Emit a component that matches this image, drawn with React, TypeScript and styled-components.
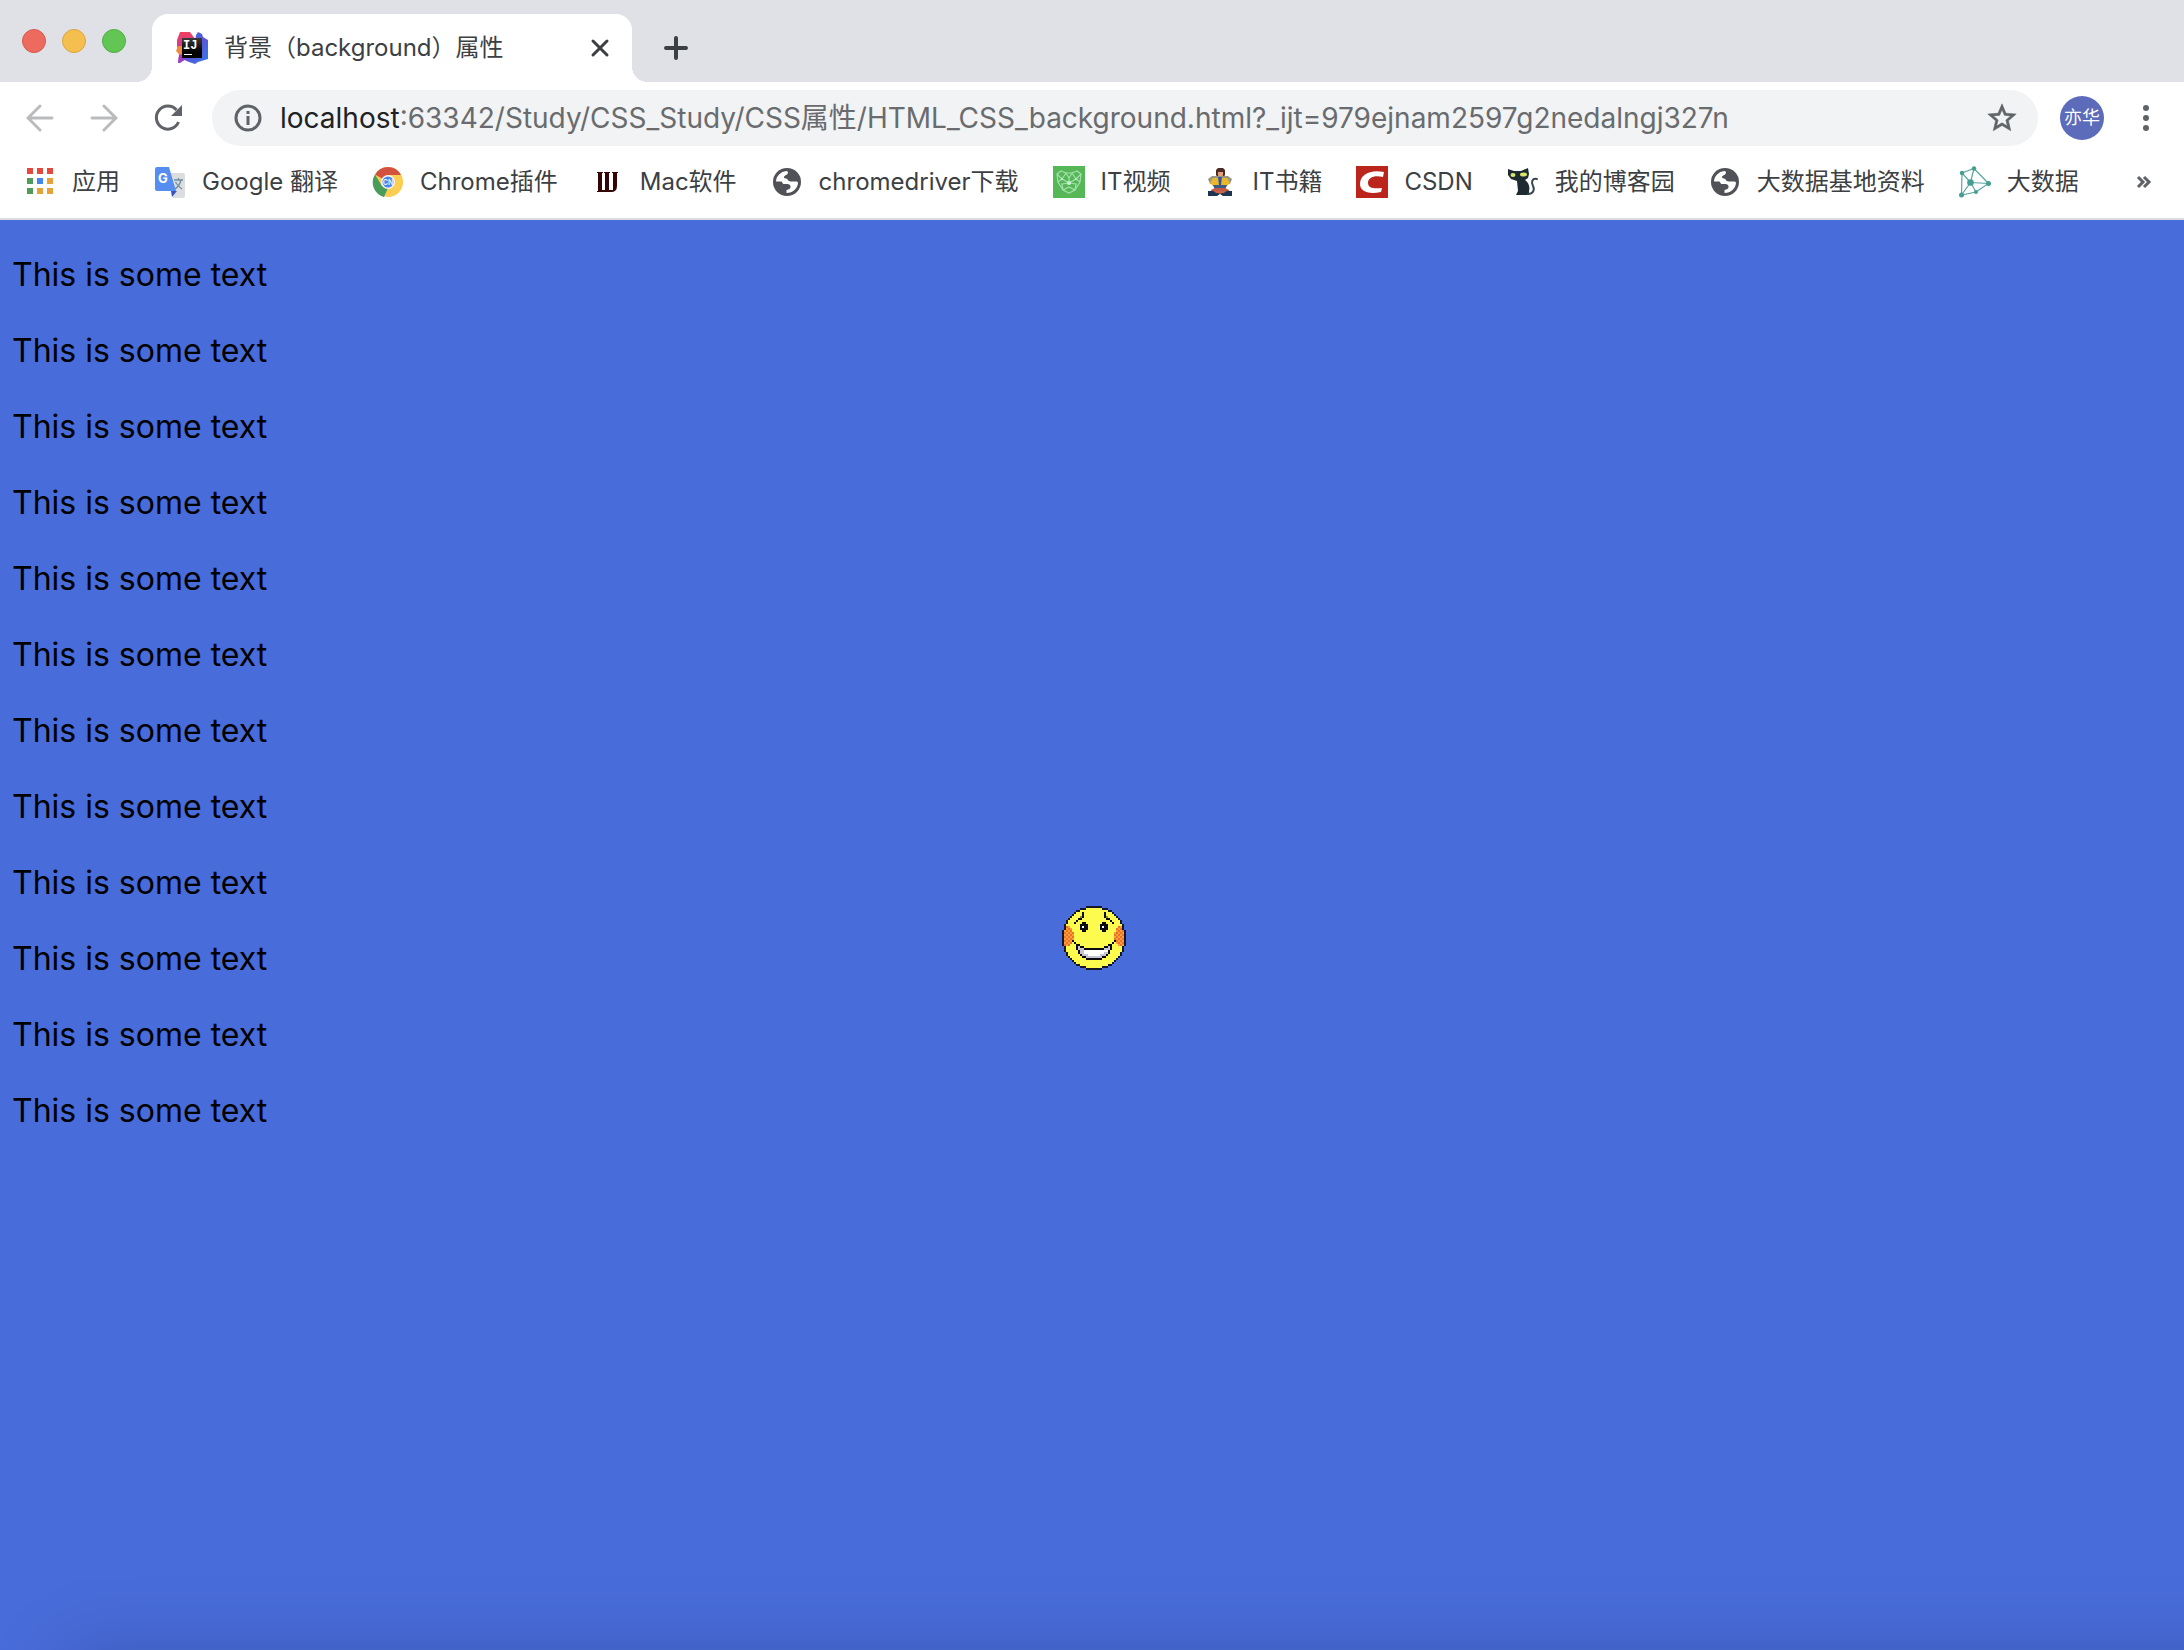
import React from 'react';
import styled, { createGlobalStyle } from 'styled-components';

const colors = {
  strip: '#dfe1e6',
  field: '#f1f3f4',
  ink: '#3c4043',
  icon: '#5f6368',
  iconOff: '#babbbd',
  page: '#486cda',
};

const GlobalStyle = createGlobalStyle`
  * { box-sizing: border-box; }
  body {
    margin: 0;
    font-family: Inter, 'Noto Sans CJK SC', sans-serif;
    color: ${colors.ink};
    background: #fff;
  }
`;

const Window = styled.div`
  display: flex;
  flex-direction: column;
  min-height: 100vh;
`;

const TabStrip = styled.header`
  display: flex;
  align-items: flex-end;
  padding: 14px 28px 0 22px;
  background: ${colors.strip};
`;

const Lights = styled.div`
  display: flex;
  align-self: center;
  gap: 16px;
  padding-bottom: 14px;
`;

const Light = styled.button<{ $fill: string; $edge: string }>`
  width: 24px;
  height: 24px;
  padding: 0;
  border: 1px solid ${(p) => p.$edge};
  border-radius: 50%;
  background: ${(p) => p.$fill};
`;

const Tab = styled.div`
  position: relative;
  display: flex;
  align-items: center;
  gap: 16px;
  width: 480px;
  height: 68px;
  margin-left: 26px;
  padding: 0 16px 0 24px;
  border-radius: 16px 16px 0 0;
  background: #fff;

  &::before,
  &::after {
    content: '';
    position: absolute;
    bottom: 0;
    width: 16px;
    height: 16px;
  }
  &::before {
    right: 100%;
    background: radial-gradient(circle at 0 0, transparent 16px, #fff 16px);
  }
  &::after {
    left: 100%;
    background: radial-gradient(circle at 100% 0, transparent 16px, #fff 16px);
  }
`;

const TabTitle = styled.span`
  flex: 1;
  font-size: 24px;
  line-height: 32px;
  white-space: nowrap;
`;

const IconButton = styled.button<{ $size: number }>`
  display: flex;
  flex: none;
  align-items: center;
  justify-content: center;
  width: ${(p) => p.$size}px;
  height: ${(p) => p.$size}px;
  padding: 0;
  border: 0;
  border-radius: 50%;
  background: transparent;
`;

const NewTab = styled(IconButton)`
  margin: 0 0 10px 20px;
`;

const Toolbar = styled.nav`
  display: flex;
  align-items: center;
  padding: 8px 14px 0 16px;
`;

const NavButtons = styled.div`
  display: flex;
  gap: 16px;
`;

const AddressBar = styled.form`
  display: flex;
  flex: 1;
  align-items: center;
  height: 56px;
  margin: 0 22px 0 20px;
  padding: 0 16px 0 20px;
  border-radius: 28px;
  background: ${colors.field};
  font-size: 28px;
  line-height: 40px;
`;

const Host = styled.label`
  padding-left: 16px;
  color: #202124;
`;

const AddressInput = styled.input`
  flex: 1;
  min-width: 0;
  height: 40px;
  padding: 0;
  border: 0;
  outline: 0;
  background: transparent;
  font: inherit;
  color: #696b6e;
`;

const Avatar = styled.button`
  width: 44px;
  height: 44px;
  margin-right: 18px;
  padding: 0;
  border: 0;
  border-radius: 50%;
  background: #5c6bba;
  color: #fff;
  font: 18px/44px Inter, 'Noto Sans CJK SC', sans-serif;
`;

const Bookmarks = styled.nav`
  display: flex;
  align-items: center;
  gap: 34px;
  height: 74px;
  padding: 0 28px 0 24px;
  border-bottom: 2px solid #dadce0;
`;

const Bookmark = styled.a`
  display: flex;
  flex: none;
  align-items: center;
  gap: 16px;
  color: inherit;
  font-size: 24px;
  line-height: 32px;
  text-decoration: none;
  white-space: nowrap;
`;

const More = styled(IconButton)`
  margin-left: auto;
`;

const Page = styled.main`
  position: relative;
  flex: 1;
  overflow: hidden;
  padding: 1px 12px;
  background: ${colors.page};

  &::after {
    content: '';
    position: absolute;
    top: 100%;
    left: 64px;
    right: -100px;
    height: 100px;
    box-shadow: 0 0 76px rgba(0, 0, 0, 0.17);
  }
`;

const Line = styled.p`
  margin: 32px 0;
  color: #000;
  font-size: 32px;
  line-height: 44px;
`;

const Backdrop = styled.div`
  position: absolute;
  inset: 6px 0 0 4px;
  display: grid;
  place-items: center;
`;

type Pixel = [x: number, y: number, w: number, h: number, fill: string];

const facePixels = (): Pixel[] => {
  const out: Pixel[] = [];
  const inside = (x: number, y: number) => (x - 15.5) ** 2 + (y - 15.5) ** 2 <= 256;
  for (let y = 0; y < 32; y++) {
    for (let x = 0; x < 32; x++) {
      if (!inside(x, y)) continue;
      const edge = !inside(x - 1, y) || !inside(x + 1, y) || !inside(x, y - 1) || !inside(x, y + 1);
      const fromSide = Math.min(x, 31 - x);
      const reach = 6 - Math.abs(y - 14.5) * 0.45;
      let fill = '#fdfb4e';
      if (y >= 10 && y <= 19 && fromSide <= reach) fill = (x + y) % 2 ? '#f9a035' : '#ee6f2d';
      if (edge) fill = '#15172a';
      out.push([x, y, 1, 1, fill]);
    }
  }
  const k = '#0b0b10';
  const w = '#ffffff';
  const g = '#c4c6d0';
  out.push(
    [10, 3, 1, 3, k], [9, 6, 1, 1, k], [8, 6, 1, 1, k], [7, 7, 1, 1, k], [6, 8, 1, 1, k], [9, 5, 1, 1, '#8d8b35'],
    [21, 3, 1, 3, k], [22, 6, 1, 1, k], [23, 6, 1, 1, k], [24, 7, 1, 1, k], [25, 8, 1, 1, k], [22, 5, 1, 1, '#8d8b35'],
    [10, 8, 2, 5, k], [9, 9, 4, 3, k], [10, 10, 1, 1, w],
    [20, 8, 2, 5, k], [19, 9, 4, 3, k], [20, 10, 1, 1, w],
    [5, 17, 1, 1, k], [6, 18, 1, 1, k], [25, 18, 1, 1, k], [26, 17, 1, 1, k],
    [7, 19, 1, 3, k], [8, 22, 1, 2, k], [9, 24, 1, 1, k], [10, 25, 2, 1, k], [12, 26, 8, 1, k],
    [24, 19, 1, 3, k], [23, 22, 1, 2, k], [22, 24, 1, 1, k], [20, 25, 2, 1, k],
    [8, 20, 1, 2, g], [23, 20, 1, 2, g], [8, 19, 1, 1, k], [23, 19, 1, 1, k],
    [9, 20, 2, 1, k], [21, 20, 2, 1, k], [11, 21, 10, 1, k],
    [9, 21, 2, 1, g], [21, 21, 2, 1, g],
    [9, 22, 14, 2, w], [10, 24, 12, 1, w], [12, 25, 8, 1, g],
    [9, 22, 2, 2, g], [10, 24, 3, 1, g], [19, 24, 3, 1, g], [21, 23, 2, 1, g],
  );
  return out;
};

const Smiley = () => (
  <svg width="64" height="64" viewBox="0 0 32 32" shapeRendering="crispEdges" role="img" aria-label="smiley">
    {facePixels().map(([x, y, w, h, fill], i) => (
      <rect key={i} x={x} y={y} width={w} height={h} fill={fill} />
    ))}
  </svg>
);

const Favicon = ({ children }: { children: React.ReactNode }) => (
  <svg width="32" height="32" viewBox="0 0 32 32" aria-hidden="true">
    {children}
  </svg>
);

const IdeaIcon = () => (
  <Favicon>
    <defs>
      <linearGradient id="ideaWarm" x1="0" y1="0" x2="0" y2="1">
        <stop offset="0" stopColor="#f0405a" />
        <stop offset="0.4" stopColor="#d93a8c" />
        <stop offset="1" stopColor="#7a49dc" />
      </linearGradient>
      <linearGradient id="ideaCool" x1="0" y1="0" x2="1" y2="1">
        <stop offset="0" stopColor="#3f6fe4" />
        <stop offset="0.55" stopColor="#5a57d8" />
        <stop offset="1" stopColor="#2a80ec" />
      </linearGradient>
      <linearGradient id="ideaBox" x1="0" y1="0" x2="0" y2="1">
        <stop offset="0" stopColor="#3a3a3a" />
        <stop offset="0.7" stopColor="#000" />
      </linearGradient>
    </defs>
    <path d="M4 0h10l5 7-6 18-9 6H2l1-8-2-9 0-6z" fill="url(#ideaWarm)" />
    <path d="M22 0l4 2 1 3 5 3v19l-10 3-3 2-6-2-7-3 12-12 2-12z" fill="url(#ideaCool)" />
    <path d="M2 14h5v10l-3-1-4-4z" fill="#f08a3c" />
    <path d="M3 24l3-2 4 5-8 4z" fill="#a23cc0" />
    <rect x="6" y="6" width="20" height="20" fill="url(#ideaBox)" />
    <text x="7" y="17" fontSize="12" fontWeight="700" fontFamily="'Liberation Mono', monospace" fill="#fff">
      IJ
    </text>
    <rect x="8" y="22" width="8" height="1" fill="#fff" />
  </Favicon>
);

const AppsIcon = () => {
  const r = '#e5493e';
  const g = '#529a5c';
  const y = '#e7a13a';
  const cells = [r, r, r, g, '#4285f4', y, g, y, y];
  return (
    <Favicon>
      {cells.map((fill, i) => (
        <rect key={i} x={3 + (i % 3) * 10} y={2 + Math.floor(i / 3) * 10} width="6" height="6" fill={fill} />
      ))}
    </Favicon>
  );
};

const TranslateIcon = () => (
  <Favicon>
    <path d="M14 7h15a2 2 0 012 2v21a2 2 0 01-2 2H19z" fill="#dcdddf" />
    <path d="M17 25h6l-5 6z" fill="#3a52bd" />
    <path d="M3 1h12l7 24H3a2 2 0 01-2-2V3a2 2 0 012-2z" fill="#568df0" />
    <text x="4" y="17" fontSize="13" fontWeight="700" fill="#fff">G</text>
    <path d="M20 14h9M24.500 12v2M27 14c-1 4-3 7-6 9M21.500 16c1.500 3 4 5 6.500 7" fill="none" stroke="#6f8fa0" strokeWidth="1.300" />
  </Favicon>
);

const ChromeIcon = () => (
  <Favicon>
    <circle cx="16" cy="16" r="15" fill="#fbce53" />
    <path d="M16 16L3 8.500A15 15 0 0116 1a15 15 0 0113 8H16z" fill="#d2523f" />
    <path d="M3 8.500l7 11.500 6 2-4 9A15 15 0 013 8.500z" fill="#4a9c5b" />
    <path d="M16 9h13A15 15 0 0116 31h-1l7-12z" fill="#fbce53" />
    <circle cx="16" cy="16" r="7" fill="#f4f4f4" />
    <circle cx="16" cy="16" r="5.500" fill="#4c86ea" />
    <text x="16" y="18.500" fontSize="7" fontWeight="700" textAnchor="middle" fill="#dfeaff">CN</text>
  </Favicon>
);

const MacSoftIcon = () => (
  <Favicon>
    <path d="M5 6h6v1h-1v17h3V7h-1V6h6v1h-1v17h4V7h-1V6h6v1h-1v13q0 6-6 6H5v-1h1V7H5z" fill="#330505" />
  </Favicon>
);

const GlobeIcon = () => (
  <Favicon>
    <circle cx="16" cy="16" r="14" fill="#505257" />
    <path
      d="M5 15.500C5.300 10 9.500 5.600 15.500 5c2 .5 1.800 2.500.5 3.400-2 1.300-3.400 1.600-3 3.200.4 1.400 3 .6 3.600 2 .5 1.300 1.700 1.900 3.400 1.900h4.500c1.300 0 2.500.3 2.500 1.500C26.500 22.500 22 27 15.500 27v-3c2.800-.4 4.500-1.800 4-4-.4-1.600-2-2-4-2h-3c-1.200-.3-1-2.500-2.500-2.500z"
      fill="#fff"
    />
  </Favicon>
);

const HeadMeshIcon = () => (
  <Favicon>
    <rect width="32" height="32" fill="#55b756" />
    <g fill="none" stroke="#a5dfac" strokeWidth="1.200">
      <path d="M4 8l4-3 5 2h6l5-2 4 3-1 8-5 8-6 3-6-3-5-8z" />
      <path d="M4 8l5 5 4-6 3 5 3-5 4 6 5-5M5 16l4-3 7 4 7-4 4 3M10 24l-1-6 7-1 7 1-1 6M16 12v5M10 24l6-3 6 3" />
    </g>
    <g fill="#c9f0cf">
      <circle cx="16" cy="17" r="2" />
      <circle cx="9" cy="13" r="1" />
      <circle cx="23" cy="13" r="1" />
    </g>
  </Favicon>
);

const ReaderIcon = () => (
  <Favicon>
    <path d="M14 2h5l2 2v5l-2 3h-5l-2-3V4z" fill="#4d2a22" />
    <path d="M14 6h5v3l-1 3h-3l-1-3z" fill="#e3a07c" />
    <path d="M4 13l4-3h16l4 3-2 5H6z" fill="#9b9584" />
    <path d="M9 12h14l3 5-4 4H10l-4-4z" fill="#e9b62c" />
    <path d="M14 11h4l-1 8h-2z" fill="#36549a" />
    <path d="M9 19h14l-2 5H11z" fill="#3b5a86" />
    <path d="M7 24l4-2h10l4 2v4H7z" fill="#bf5b43" />
    <path d="M4 25h5l7 3 7-3h5v5h-9l-3-2-3 2H4z" fill="#1d3550" />
    <path d="M10 25h12l-2 2h-8z" fill="#c8654a" />
  </Favicon>
);

const CsdnIcon = () => (
  <Favicon>
    <rect width="32" height="32" fill="#bb251b" />
    <path d="M28 6l-1 5c-8-2-15 0-15 6 0 5 6 6 14 5l-1 4C12 29 4 25 4 18 4 8 15 3 28 6z" fill="#fff" />
  </Favicon>
);

const CatIcon = () => (
  <Favicon>
    <path d="M1 3l6 2h7l7-3 1 6-1 4-3 2c4 3 5 7 4 11v4H9l2-4-1-10-6-2-3-4z" fill="#1d2b31" />
    <path d="M21 28c5 0 7-4 5-8-2-4-1-8 4-7" fill="none" stroke="#34464c" strokeWidth="2" strokeLinecap="round" />
    <ellipse cx="6" cy="9" rx="2.500" ry="2" fill="#d9e66a" />
    <ellipse cx="16.500" cy="8.500" rx="3.500" ry="2" fill="#d9e66a" />
  </Favicon>
);

const NetworkIcon = () => (
  <Favicon>
    <path
      d="M3 7l12-4.500 14.500 15L17 26 2.500 29zL11.500 16.500 29.500 17.500M15 2.500l-3.500 14L2.500 29M11.500 16.500L17 26"
      fill="none"
      stroke="#58a89d"
      strokeWidth="1.200"
    />
    <g fill="#469d91">
      <circle cx="3" cy="7" r="2.200" />
      <circle cx="15" cy="2.500" r="2.200" />
      <circle cx="29.500" cy="17.500" r="2.500" />
      <circle cx="17" cy="26" r="2" />
      <circle cx="2.500" cy="29" r="2.500" />
      <circle cx="11.500" cy="16.500" r="3.300" />
    </g>
  </Favicon>
);

const bookmarks: { label: string; Icon: React.FC }[] = [
  { label: '应用', Icon: AppsIcon },
  { label: 'Google 翻译', Icon: TranslateIcon },
  { label: 'Chrome插件', Icon: ChromeIcon },
  { label: 'Mac软件', Icon: MacSoftIcon },
  { label: 'chromedriver下载', Icon: GlobeIcon },
  { label: 'IT视频', Icon: HeadMeshIcon },
  { label: 'IT书籍', Icon: ReaderIcon },
  { label: 'CSDN', Icon: CsdnIcon },
  { label: '我的博客园', Icon: CatIcon },
  { label: '大数据基地资料', Icon: GlobeIcon },
  { label: '大数据', Icon: NetworkIcon },
];

const Stroke = ({ d, size, color, width = 3 }: { d: string; size: number; color: string; width?: number }) => (
  <svg width={size} height={size} viewBox={`0 0 ${size} ${size}`} aria-hidden="true">
    <path d={d} fill="none" stroke={color} strokeWidth={width} strokeLinecap="round" />
  </svg>
);

const LINE_COUNT = 12;

export default function App() {
  return (
    <Window>
      <GlobalStyle />
      <TabStrip>
        <Lights>
          <Light aria-label="Close window" $fill="#ed6a5f" $edge="#d8584e" />
          <Light aria-label="Minimize window" $fill="#f5bf4f" $edge="#dca63c" />
          <Light aria-label="Zoom window" $fill="#62c554" $edge="#4fae43" />
        </Lights>
        <Tab>
          <IdeaIcon />
          <TabTitle>背景（background）属性</TabTitle>
          <IconButton $size={32} aria-label="Close tab">
            <Stroke size={20} color={colors.ink} d="M3 3l14 14M17 3L3 17" />
          </IconButton>
        </Tab>
        <NewTab $size={48} aria-label="New tab">
          <Stroke size={28} color={colors.ink} width={4} d="M14 4v20M4 14h20" />
        </NewTab>
      </TabStrip>

      <Toolbar>
        <NavButtons>
          <IconButton $size={48} aria-label="Back">
            <Stroke size={28} color={colors.iconOff} d="M26 14H3M14 2L2 14l12 12" />
          </IconButton>
          <IconButton $size={48} aria-label="Forward">
            <Stroke size={28} color={colors.iconOff} d="M2 14h23M14 2l12 12-12 12" />
          </IconButton>
          <IconButton $size={48} aria-label="Reload">
            <svg width="28" height="28" viewBox="0 0 28 28" aria-hidden="true">
              <path d="M24.500 18A11.500 11.500 0 1122.500 6" fill="none" stroke={colors.icon} strokeWidth="3" />
              <path d="M28 1v11H17z" fill={colors.icon} />
            </svg>
          </IconButton>
        </NavButtons>
        <AddressBar>
          <IconButton $size={32} type="button" aria-label="Site information">
            <svg width="28" height="28" viewBox="0 0 28 28" aria-hidden="true">
              <circle cx="14" cy="14" r="12" fill="none" stroke={colors.icon} strokeWidth="3" />
              <path d="M14 7v3M14 12v9" stroke={colors.icon} strokeWidth="3" />
            </svg>
          </IconButton>
          <Host htmlFor="address">localhost</Host>
          <AddressInput
            id="address"
            spellCheck={false}
            defaultValue=":63342/Study/CSS_Study/CSS属性/HTML_CSS_background.html?_ijt=979ejnam2597g2nedalngj327n"
          />
          <IconButton $size={40} type="button" aria-label="Bookmark this page">
            <svg width="34" height="34" viewBox="0 0 24 24" fill={colors.icon} stroke={colors.icon} strokeWidth="0.400" aria-hidden="true">
              <path d="M22 9.240l-7.190-.62L12 2 9.190 8.630 2 9.240l5.460 4.730L5.820 21 12 17.270 18.180 21l-1.630-7.030L22 9.240zM12 15.400l-3.760 2.270 1-4.280-3.320-2.880 4.380-.38L12 6.100l1.710 4.040 4.380.38-3.320 2.880 1 4.280L12 15.400z" />
            </svg>
          </IconButton>
        </AddressBar>
        <Avatar>亦华</Avatar>
        <IconButton $size={48} aria-label="Menu">
          <svg width="28" height="28" viewBox="0 0 28 28" fill={colors.icon} aria-hidden="true">
            <circle cx="14" cy="4" r="3" />
            <circle cx="14" cy="14" r="3" />
            <circle cx="14" cy="24" r="3" />
          </svg>
        </IconButton>
      </Toolbar>

      <Bookmarks>
        {bookmarks.map(({ label, Icon }) => (
          <Bookmark href="#" key={label}>
            <Icon />
            {label}
          </Bookmark>
        ))}
        <More $size={24} aria-label="More bookmarks">
          <svg width="16" height="16" viewBox="0 0 16 16" aria-hidden="true">
            <path d="M2 3l5 5-5 5M8 3l5 5-5 5" fill="none" stroke={colors.icon} strokeWidth="3" />
          </svg>
        </More>
      </Bookmarks>

      <Page>
        <Backdrop>
          <Smiley />
        </Backdrop>
        {Array.from({ length: LINE_COUNT }, (_, i) => (
          <Line key={i}>This is some text</Line>
        ))}
      </Page>
    </Window>
  );
}
